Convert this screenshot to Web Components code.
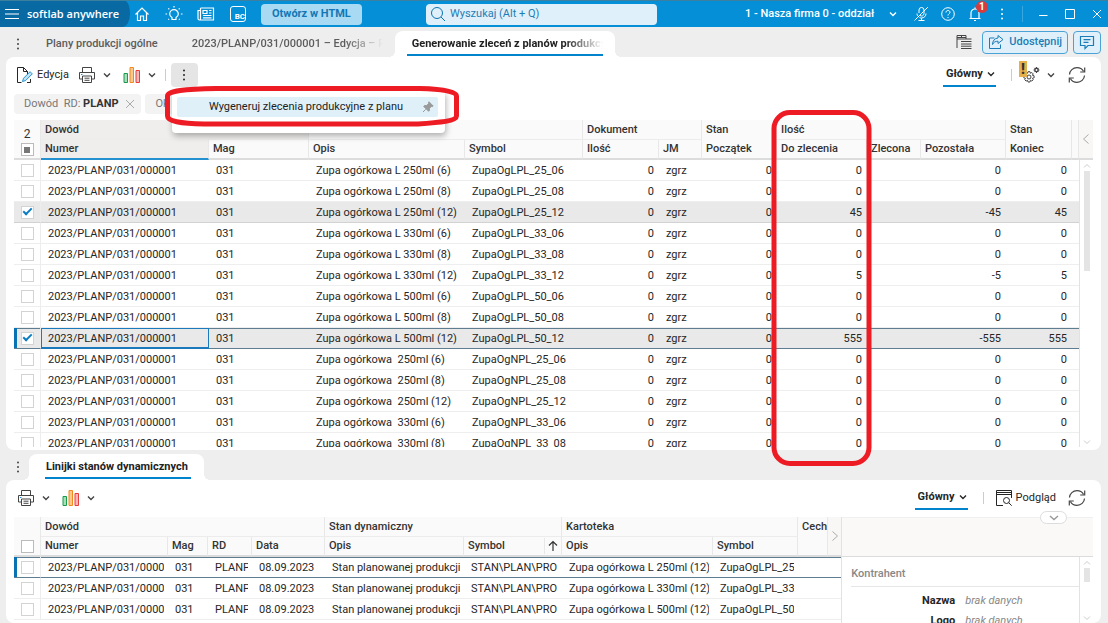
<!DOCTYPE html>
<html lang="pl">
<head>
<meta charset="utf-8">
<meta name="viewport" content="width=device-width, initial-scale=1">
<title>softlab anywhere</title>
<style>
html, body { height: 100%; margin: 0; }
body {
  --accent: #0284cc;
  --accent-dark: #0b73b0;
  --line: #e6e6e6;
  --head: #fafafa;
  --text: #262626;
  font: 400 11px/16px Roboto, "Noto Sans", sans-serif;
  color: var(--text);
  background: #eee;
  overflow: hidden;
}
</style>
</head>
<body>
<sa-app></sa-app>

<script>
/* Icon set: every glyph is drawn on its own viewBox with the current text colour. */
const ICONS = {
  menu: ['0 0 16 16', '<path d="M1 3.500h14M1 8h14M1 12.500h14" stroke-width="1.200"/>'],
  home: ['0 0 16 16', '<path d="M1.500 8.500L8 2l6.500 6.500M3.500 7v7.500h3V10h3v4.500h3V7" stroke-width="1.200"/>'],
  bulb: ['0 0 18 18', '<path d="M7 14.500v-2C5.500 11.700 4.700 10.500 4.700 9a4.300 4.300 0 0 1 8.600 0c0 1.500-.8 2.700-2.300 3.500v2zM9 1v1.600M.5 9h1.600M15.900 9h1.600M3.300 3.300l1 1M14.700 3.300l-1 1M3.300 14.700l.8-.8M14.700 14.700l-.8-.8" stroke-width="1.200"/>'],
  news: ['0 0 18 16', '<path d="M3.500 2h13v12h-14c-1 0-1.500-.7-1.500-1.500V4.500h2.500M3.500 2v10.500c0 1-.5 1.500-1 1.500M12 4.500h2.500M12 7h2.500M6 9.500h8.500M6 11.800h8.500" stroke-width="1.200"/><path d="M6 4.500h4v3H6z" stroke-width="1.200"/>'],
  search: ['0 0 16 16', '<circle cx="7" cy="7" r="5.500"/><path d="M11 11l4 4"/>'],
  chevron: ['0 0 10 10', '<path d="M2 3.500l3 3 3-3" stroke-width="1.400"/>'],
  fold: ['0 0 12 8', '<path d="M2 2l4 3.500L10 2" stroke-width="1.400"/>'],
  left: ['0 0 10 12', '<path d="M7.500 1.500L2.500 6l5 4.500"/>'],
  right: ['0 0 10 12', '<path d="M2.500 1.500L7.500 6l-5 4.500"/>'],
  up: ['0 0 10 10', '<path d="M2 6.500l3-3 3 3"/>'],
  down: ['0 0 10 10', '<path d="M2 3.500l3 3 3-3"/>'],
  mic: ['0 0 16 16', '<path d="M6 7V4a2.500 2.500 0 0 1 5 0v3.500a2.500 2.500 0 0 1-4 2M4 7.500c0 1 .2 1.700.7 2.400M13 7.500c0 2.500-1.800 4.500-4.500 4.500-.8 0-1.500-.2-2-.5M8.500 12v2.500M5.500 14.500h6M15 1L1.500 14.500"/>'],
  help: ['0 0 16 16', '<circle cx="8" cy="8" r="6.300"/><path d="M6 6.500C6 5.200 6.900 4.500 8 4.500s2 .7 2 1.800c0 1.400-2 1.600-2 3.200M8 11v1"/>'],
  bell: ['0 0 16 16', '<path d="M2.500 12.500h11M4 12.500V7a4 4 0 0 1 8 0v5.500M7 14.500h2M8 3V1.500" stroke-width="1.200"/>'],
  dots: ['0 0 6 16', '<g fill="currentColor" stroke="none"><circle cx="3" cy="3.500" r="1"/><circle cx="3" cy="8" r="1"/><circle cx="3" cy="12.500" r="1"/></g>'],
  min: ['0 0 12 12', '<path d="M2 7.500h8.500"/>'],
  max: ['0 0 12 12', '<path d="M1.500 1.500h9v9h-9z"/>'],
  close: ['0 0 12 12', '<path d="M2 2l8 8M10 2l-8 8"/>'],
  layout: ['0 0 16 16', '<path d="M1 14V1.500h9V5H1M1 3.500h9M5.500 1.500V4M5 7.500h10.500M5 10h10.500M5 12.200h10.500M5 14.500h10.500M10 5h5.500"/>'],
  share: ['0 0 16 16', '<path d="M6.500 4H1.500v10.500h11v-4M10 1.500L15 5.500l-5 4V7.200C7.500 7.200 5.500 8.200 4.500 10.500c0-3.500 2-6.200 5.500-6.500z"/>'],
  comment: ['0 0 16 16', '<path d="M1.500 2.500h13v9H9L6 14.500v-3H1.500zM4.500 5.700h7M4.500 8.300h5" stroke-width="1.200"/>'],
  edit: ['0 0 18 18', '<path d="M5.500 16.500h-4v-15h6l4 4v3M7.500 1.500v4h4M14.500 13v3.500H11"/><path d="M6.500 15.500l1-3.200 6.600-6.600 2.200 2.200-6.600 6.600z" stroke="#2490d0" fill="#bfe2f6"/>'],
  print: ['0 0 18 18', '<path d="M4.500 6V1.500h9V6M4 13H1.500V6.500h15V13H14M4.500 10h9v6.500h-9zM6.500 12.200h5M6.500 14.300h5"/><path d="M3 8.500h1.500" stroke="#2490d0"/>'],
  chart: ['0 0 18 18', '<path d="M1 7.500h3.500v9H1z" stroke="#189a4c" fill="#a6dfb8"/><path d="M7 1.500h3.500v15H7z" stroke="#f08a1c" fill="#fac98d"/><path d="M13 4.500h3.500v12H13z" stroke="#e63c3c" fill="#f9b6b4"/>'],
  gear: ['0 0 18 18', '<circle cx="7" cy="11" r="2"/><path d="M6 5.700h2l.4 1.600 1.400-.8 1.400 1.400-.8 1.400 1.700.5v2l-1.700.5.8 1.400-1.400 1.400-1.400-.8-.4 1.700H6l-.5-1.700-1.400.8-1.400-1.400.8-1.400-1.700-.5v-2l1.700-.5-.8-1.400 1.400-1.400 1.400.8z"/><circle cx="14.500" cy="4" r="1.700" stroke-width="1.500"/><path d="M14.500 1v1M14.500 6v1M11.500 4h1M16.500 4h1M12.400 1.900l.7.7M16 5.400l.7.7M16.600 1.900l-.7.7M13 5.400l-.7.7"/>'],
  refresh: ['0 0 18 18', '<path d="M1.500 8.500C1.700 4.500 5 1.700 9 1.700c2.800 0 5.200 1.300 6.500 3.600M16.700 1.500v4.500h-4.500M16.500 9.500c-.2 4-3.500 6.800-7.500 6.800-2.800 0-5.200-1.300-6.500-3.600M1.300 16.500V12h4.500" stroke-width="1.200"/>'],
  preview: ['0 0 18 18', '<path d="M8 16.500H1.500v-15h15V9M1.500 3.500h15M1.500 5.500h15"/><circle cx="11.500" cy="11.500" r="3"/><path d="M13.700 13.700l3 3"/>'],
  pin: ['0 0 12 12', '<path d="M7 .8L11.200 5l-1 .6-.8-.2-2 2 .1 2-.9.9L1.700 5.400l.9-.9 2 .1 2-2-.2-.8zM3.700 8.300L1 11" fill="currentColor"/>'],
  sort: ['0 0 12 12', '<path d="M6 11V1.500M2 5.500l4-4 4 4" stroke-width="1.200"/>']
};

class SaIcon extends HTMLElement {
  connectedCallback() {
    const [box, body] = ICONS[this.getAttribute('name')];
    const [, , w, h] = box.split(' ').map(Number);
    this.attachShadow({ mode: 'open' }).innerHTML = `
      <style>
        :host { display: inline-flex; flex: none; }
        svg { display: block; fill: none; stroke: currentColor; stroke-width: 1; }
      </style>
      <svg width="${w}" height="${h}" viewBox="${box}" aria-hidden="true">${body}</svg>`;
  }
}
customElements.define('sa-icon', SaIcon);

/* <sa-button label> — toolbar button; "drop" adds the chevron. */
class SaButton extends HTMLElement {
  connectedCallback() {
    const label = this.getAttribute('label');
    this.attachShadow({ mode: 'open' }).innerHTML = `
      <style>
        :host { display: inline-flex; flex: none; }
        button {
          display: flex; align-items: center; justify-content: center; gap: 3px;
          min-width: var(--btn-width, 0); height: var(--btn-height, 24px);
          margin: 0; padding: var(--btn-padding, 0);
          font: inherit; font-size: 11px; color: inherit;
          background: var(--btn-bg, none); border: var(--btn-border, 0); border-radius: 4px;
          cursor: pointer; white-space: nowrap;
        }
        .chev { margin-left: 3px; }
        button:focus-visible { outline: 2px solid currentColor; }
      </style>
      <button type="button"${label ? ` aria-label="${label}"` : ''}>
        <slot></slot>${this.hasAttribute('drop') ? '<sa-icon class="chev" name="chevron"></sa-icon>' : ''}
      </button>`;
  }
}
customElements.define('sa-button', SaButton);

/* <sa-select value label> — drop-down with its own chevron. */
class SaSelect extends HTMLElement {
  connectedCallback() {
    this.attachShadow({ mode: 'open' }).innerHTML = `
      <style>
        :host { display: inline-grid; flex: none; grid-template-columns: auto var(--chev-col, 13px); align-items: center; }
        select {
          grid-area: 1 / 1 / 2 / 3; appearance: none; margin: 0; border: 0; padding: 0 var(--chev-col, 13px) 0 0;
          font: inherit; font-size: 11px; color: inherit; background: none; height: 20px;
        }
        option { color: #222; }
        sa-icon { grid-area: 1 / 2; justify-self: end; margin-right: var(--chev-gap, 0); pointer-events: none; }
      </style>
      <select aria-label="${this.getAttribute('label')}"><option>${this.getAttribute('value')}</option></select>
      <sa-icon name="chevron"></sa-icon>`;
  }
}
customElements.define('sa-select', SaSelect);

class SaTopbar extends HTMLElement {
  connectedCallback() {
    this.attachShadow({ mode: 'open' }).innerHTML = `
      <style>
        :host {
          display: grid; grid-template-columns: 17fr 231px 18fr; align-items: center;
          height: 26px; color: #fff; background: #048fd7; border-top: 1px solid #3d7f9e;
          --btn-width: 22px; --btn-height: 22px;
        }
        .left, .right { display: flex; align-items: center; height: 100%; }
        .brand {
          display: flex; align-items: center; gap: 7px; height: 100%; width: 130px;
          padding-left: 4px; box-sizing: border-box; margin-right: 1px;
          font: 600 11px/16px "Open Sans", sans-serif; white-space: nowrap;
          background: #0969a3; border-radius: 0 10px 16px 0 / 0 26px 26px 0;
        }
        .brand sa-button { --btn-width: 16px; }
        .icons { display: flex; gap: 10px; }
        .bc {
          display: flex; align-items: flex-end; justify-content: flex-end; width: 16px; height: 16px;
          box-sizing: border-box; border: 1px solid #fff; border-radius: 3px; font-size: 8px; line-height: 9px; font-weight: 700;
        }
        .html {
          --btn-bg: #a9daf3; --btn-padding: 0 11px; --btn-height: 21px; margin-left: 12px;
          color: #1277b4; font-weight: 700;
        }
        label {
          display: flex; align-items: center; gap: 4px; height: 21px; padding: 0 4px;
          background: #e0f0fa; border-radius: 4px; color: var(--accent-dark);
        }
        input { flex: 1; min-width: 0; border: 0; padding: 0; background: none; font: inherit; color: inherit; outline: 0; }
        input::placeholder { color: #1f7cb4; opacity: 1; }
        .right { justify-content: flex-end; gap: 5px; }
        sa-select { --chev-col: 30px; --chev-gap: 7px; font-weight: 500; }
        .sep { width: 1px; height: 16px; margin: 0 4px; background: #3aa8e0; }
        .bell { position: relative; display: flex; }
        .badge {
          position: absolute; right: -2px; top: -2px; width: 12px; height: 12px; border-radius: 6px;
          background: #d93a3a; font-size: 10px; line-height: 12px; font-weight: 700; text-align: center;
        }
      </style>
      <div class="left">
        <div class="brand"><sa-button label="Menu"><sa-icon name="menu"></sa-icon></sa-button>softlab anywhere</div>
        <div class="icons">
          <sa-button label="Start"><sa-icon name="home"></sa-icon></sa-button>
          <sa-button label="Porady"><sa-icon name="bulb"></sa-icon></sa-button>
          <sa-button label="Nowości"><sa-icon name="news"></sa-icon></sa-button>
          <sa-button><span class="bc">BC</span></sa-button>
        </div>
        <sa-button class="html">Otwórz w HTML</sa-button>
      </div>
      <label><sa-icon name="search"></sa-icon><input type="search" aria-label="Wyszukaj" placeholder="Wyszukaj (Alt + Q)"></label>
      <div class="right">
        <sa-select label="Firma" value="1 - Nasza firma 0 - oddział"></sa-select>
        <sa-button label="Mikrofon"><sa-icon name="mic"></sa-icon></sa-button>
        <sa-button label="Pomoc"><sa-icon name="help"></sa-icon></sa-button>
        <span class="bell"><sa-button label="Powiadomienia"><sa-icon name="bell"></sa-icon></sa-button><span class="badge">1</span></span>
        <sa-button label="Więcej"><sa-icon name="dots"></sa-icon></sa-button>
        <span class="sep"></span>
        <sa-button label="Minimalizuj"><sa-icon name="min"></sa-icon></sa-button>
        <sa-button label="Maksymalizuj"><sa-icon name="max"></sa-icon></sa-button>
        <sa-button label="Zamknij"><sa-icon name="close"></sa-icon></sa-button>
      </div>`;
  }
}
customElements.define('sa-topbar', SaTopbar);

/* <sa-tab active faded snug> — label comes in through the slot. */
class SaTab extends HTMLElement {
  connectedCallback() {
    this.attachShadow({ mode: 'open' }).innerHTML = `
      <style>
        :host { display: flex; flex: none; }
        button {
          position: relative; height: 100%; border: 0; margin: 0; padding: 0 12px; background: none;
          font: inherit; font-weight: 500; color: #5c5c5c; white-space: nowrap; cursor: pointer;
        }
        span { display: block; max-width: 191px; padding: 3px 5px 2px; overflow: hidden; border-bottom: 2px solid transparent; }
        b { display: block; font-weight: inherit; }
        :host([faded]) span { padding-right: 0; }
        :host([faded]) b { overflow: hidden; -webkit-mask-image: linear-gradient(90deg, #000 80%, transparent); mask-image: linear-gradient(90deg, #000 80%, transparent); }
        :host([snug]) button { padding: 0 13px 0 16px; }
        :host([snug]) span { padding: 3px 3px 2px 1px; }
        :host([active]) button { background: #fff; border-radius: 8px 8px 0 0; color: #222; font-weight: 700; }
        :host([active]) span { border-color: var(--accent); }
        :host([active]) button::before, :host([active]) button::after {
          content: ""; position: absolute; bottom: 0; width: 6px; height: 6px;
        }
        :host([active]) button::before { left: -6px; background: radial-gradient(circle at 0 0, transparent 6px, #fff 6px); }
        :host([active]) button::after { right: -6px; background: radial-gradient(circle at 100% 0, transparent 6px, #fff 6px); }
      </style>
      <button type="button" role="tab" aria-selected="${this.hasAttribute('active')}"><span><b><slot></slot></b></span></button>`;
  }
}
customElements.define('sa-tab', SaTab);

class SaTabs extends HTMLElement {
  connectedCallback() {
    this.attachShadow({ mode: 'open' }).innerHTML = `
      <style>
        :host { display: flex; align-items: stretch; box-sizing: border-box; height: 30px; padding: 4px 7px 0 12px; }
        .tabs { display: flex; }
        .more { align-self: center; margin-right: 5px; color: #444; --btn-width: 12px; }
        .end { display: flex; gap: 5px; align-items: center; margin-left: auto; padding-bottom: 4px; }
      </style>
      <sa-button class="more" label="Karty"><sa-icon name="dots"></sa-icon></sa-button>
      <div class="tabs" role="tablist"><slot></slot></div>
      <div class="end"><slot name="end"></slot></div>`;
  }
}
customElements.define('sa-tabs', SaTabs);

/* <sa-card> — white panel: toolbar slots on top, content below. */
class SaCard extends HTMLElement {
  connectedCallback() {
    this.attachShadow({ mode: 'open' }).innerHTML = `
      <style>
        :host {
          display: flex; flex-direction: column; min-height: 0; box-sizing: border-box;
          margin: 0 7px 0 6px; padding: 0 8px 3px; background: #fff; border-radius: 8px;
        }
        .bar { display: flex; flex: none; justify-content: space-between; align-items: center; height: 36px; }
        .group { display: flex; align-items: center; }
      </style>
      <div class="bar">
        <div class="group"><slot name="start"></slot></div>
        <div class="group"><slot name="end"></slot></div>
      </div>
      <slot></slot>`;
  }
}
customElements.define('sa-card', SaCard);

class SaChip extends HTMLElement {
  connectedCallback() {
    this.attachShadow({ mode: 'open' }).innerHTML = `
      <style>
        :host {
          display: flex; align-items: center; gap: 6px; height: 20px; padding: 0 5px 0 10px;
          background: #f3f3f3; border-radius: 4px; color: #777; font-size: 11px;
        }
        sa-button { color: #aaa; --btn-height: 16px; }
      </style>
      <slot></slot>
      <sa-button label="Usuń filtr"><sa-icon name="close"></sa-icon></sa-button>`;
  }
}
customElements.define('sa-chip', SaChip);

/* <sa-menu> — popup with pinnable items. */
class SaMenu extends HTMLElement {
  connectedCallback() {
    this.attachShadow({ mode: 'open' }).innerHTML = `
      <style>
        :host {
          display: block; box-sizing: border-box; width: 273px; padding: 6px 7px 16px 5px;
          background: #fff; border-radius: 4px; box-shadow: 1px 3px 6px rgba(0, 0, 0, .3);
        }
        button {
          display: flex; justify-content: space-between; align-items: center; width: 100%; height: 20px;
          padding: 0 4px 0 32px; border: 0; border-radius: 2px; background: #e0f0f9;
          font: inherit; font-size: 11px; color: #222; white-space: nowrap;
        }
        sa-icon { color: #9a9a9a; }
      </style>
      <button type="button" role="menuitem"><slot></slot><sa-icon name="pin"></sa-icon></button>`;
  }
}
customElements.define('sa-menu', SaMenu);

/* <sa-scrollbar> — thin scroll rail; --thumb sets the thumb length. */
class SaScrollbar extends HTMLElement {
  connectedCallback() {
    this.attachShadow({ mode: 'open' }).innerHTML = `
      <style>
        :host {
          display: flex; flex-direction: column; align-items: center; flex: 1; min-height: 0;
          padding-top: 1px; border-left: 1px solid #e2e2e2; color: #ccc;
        }
        i { width: 6px; height: var(--thumb, 100px); flex: none; background: #e4e4e4; margin-bottom: auto; }
      </style>
      <sa-icon name="up"></sa-icon><i></i><sa-icon name="down"></sa-icon>`;
  }
}
customElements.define('sa-scrollbar', SaScrollbar);

/*
 * <sa-grid> — data table with grouped headers.
 * Model: { count, groups: [{ label, cols: [{ label, width, num, sort, key }] }], rows, checked, current }
 */
class SaGrid extends HTMLElement {
  connectedCallback() {
    this.attachShadow({ mode: 'open' });
    this._render(GRIDS[this.getAttribute('source')]);
  }

  _render(m) {
    const cols = m.groups.flatMap(g => g.cols);
    const colgroup = cols.map(c => `<col${c.width ? ` style="width:${c.width}px"` : ''}>`).join('');
    const groupRow = m.groups.map(g => `
      <th colspan="${g.cols.length}" class="${g.cols.length > 1 ? 'multi' : ''}${g.active ? ' active' : ''}"><div>${g.label}</div></th>`).join('');
    const colRow = cols.map(c => `
      <th class="${c.key ? 'active key' : ''}"><div>${c.label}${c.sort ? '<i class="sort"><sa-icon name="sort"></sa-icon></i>' : ''}</div></th>`).join('');
    const body = m.rows.map((r, i) => {
      const checked = m.checked.includes(i);
      const cls = [checked ? 'checked' : '', m.current === i ? 'current' : ''].join(' ');
      return `<tr class="${cls}">
        <td class="tick"><input type="checkbox" aria-label="Wiersz ${i + 1}"${checked ? ' checked' : ''}></td>
        ${cols.map((c, k) => `<td class="${c.num ? 'num' : ''}"><div>${r[k] === undefined ? '' : r[k]}</div></td>`).join('')}
      </tr>`;
    }).join('');

    this.shadowRoot.innerHTML = `
      <style>${this._css()}</style>
      <table>
        <colgroup><col style="width:27px">${colgroup}</colgroup>
        <thead>
          <tr><th rowspan="2" class="pick">${m.count ? `<span>${m.count}</span>` : ''}<input type="checkbox" class="${m.count ? 'some' : ''}" aria-label="Zaznacz wszystkie"></th>${groupRow}</tr>
          <tr>${colRow}</tr>
        </thead>
        <tbody>${body}</tbody>
      </table>`;
  }

  _css() {
    return `
:host { display: block; flex: 1; min-width: 0; min-height: 0; overflow: hidden; }
table { width: 100%; table-layout: fixed; border-collapse: separate; border-spacing: 0; }
th, td { padding: 0; text-align: left; white-space: nowrap; box-sizing: border-box; }
div { overflow: hidden; white-space: pre; }

th { height: 20px; font-weight: 500; color: #333; background: var(--head); border-right: 1px solid #e8e8e8; }
th div { position: relative; padding: 0 4px; }
th.multi { border-bottom: 1px solid #ececec; }
tr:last-child th, th.pick { border-bottom: 2px solid #dcdcdc; }
th.active { background: #efeeec; }
th.key { border-bottom-color: #2590d0 !important; }
th.pick { text-align: center; vertical-align: bottom; font-weight: 400; font-size: 12px; padding-bottom: 1px; }
th.pick span { display: block; line-height: 14px; }
.sort { position: absolute; right: 0; top: 0; width: 16px; height: 100%; display: grid; place-items: center; background: var(--head); border-left: 1px solid #e8e8e8; }

td { height: 21px; border-bottom: 1px solid #eee; }
td div { margin: 0 4px 0 7px; padding-top: 2px; line-height: 18px; }
.num { text-align: right; }
.num div { margin-right: 5px; }
.tick { text-align: center; border-right: 1px solid #ededed; line-height: 0; }
.checked td { background: #e9e9e9; border-bottom-color: #d2d2d2; }
.current td { border-bottom-color: #5e7d91; box-shadow: inset 0 1px #5e7d91; }
.current .tick { box-shadow: inset 3px 0 #0872b5, inset 0 1px #5e7d91; }
.current.checked td:nth-child(2) { box-shadow: inset 0 0 0 1px #1b7abb; border-bottom-color: #1b7abb; }

input {
  appearance: none; display: inline-grid; place-items: center; vertical-align: middle;
  box-sizing: border-box; width: 13px; height: 13px; margin: 0; background: #fff; border: 1px solid #d3d3d3;
}
input:checked::before {
  content: ""; width: 7px; height: 3px; margin-top: -3px;
  border: solid #0b7cc4; border-width: 0 0 2px 2px; transform: rotate(-45deg);
}
td input:checked::before { box-sizing: border-box; width: 9px; height: 5px; }
th input { border-color: #bbb; }
input.some::before { content: ""; width: 6px; height: 6px; background: #777; }`;
  }
}

const DOC = '2023/PLANP/031/000001';
const soup = (name, code, toDo = 0) =>
  [DOC, '031', `Zupa ogórkowa ${name}`, `ZupaOg${code}`, 0, 'zgrz', 0, toDo, '', -toDo || 0, toDo];

const GRIDS = {
  plan: {
    count: 2,
    checked: [2, 8],
    current: 8,
    groups: [
      { label: 'Dowód', active: true, cols: [{ label: 'Numer', width: 168, key: true }, { label: 'Mag', width: 100 }] },
      { label: '', cols: [{ label: 'Opis', width: 156 }, { label: 'Symbol', width: 118 }] },
      { label: 'Dokument', cols: [{ label: 'Ilość', width: 76, num: true }, { label: 'JM', width: 43 }] },
      { label: 'Stan', cols: [{ label: 'Początek', width: 75, num: true }] },
      { label: 'Ilość', cols: [{ label: 'Do zlecenia', width: 90, num: true }, { label: 'Zlecona', width: 54, num: true }, { label: 'Pozostała', width: 85, num: true }] },
      { label: 'Stan', cols: [{ label: 'Koniec', width: 66, num: true }] },
      { label: '', cols: [{ label: '' }] }
    ],
    rows: [
      soup('L 250ml (6)', 'LPL_25_06'),
      soup('L 250ml (8)', 'LPL_25_08'),
      soup('L 250ml (12)', 'LPL_25_12', 45),
      soup('L 330ml (6)', 'LPL_33_06'),
      soup('L 330ml (8)', 'LPL_33_08'),
      soup('L 330ml (12)', 'LPL_33_12', 5),
      soup('L 500ml (6)', 'LPL_50_06'),
      soup('L 500ml (8)', 'LPL_50_08'),
      soup('L 500ml (12)', 'LPL_50_12', 555),
      soup(' 250ml (6)', 'NPL_25_06'),
      soup(' 250ml (8)', 'NPL_25_08'),
      soup(' 250ml (12)', 'NPL_25_12'),
      soup(' 330ml (6)', 'NPL_33_06'),
      soup(' 330ml (8)', 'NPL_33_08')
    ]
  },
  lines: {
    checked: [],
    current: 0,
    groups: [
      { label: 'Dowód', cols: [{ label: 'Numer', width: 127 }, { label: 'Mag', width: 40 }, { label: 'RD', width: 44 }, { label: 'Data', width: 73 }] },
      { label: 'Stan dynamiczny', cols: [{ label: 'Opis', width: 139 }, { label: 'Symbol', width: 98, sort: true }] },
      { label: 'Kartoteka', cols: [{ label: 'Opis', width: 151 }, { label: 'Symbol', width: 85 }] },
      { label: 'Cecha', cols: [{ label: '' }] }
    ],
    rows: ['250ml (12)|25_12', '330ml (12)|33_12', '500ml (12)|50_12'].map(s => {
      const [name, code] = s.split('|');
      return ['2023/PLANP/031/000001', '031', 'PLANP', '08.09.2023', 'Stan planowanej produkcji', 'STAN\\PLAN\\PRO', `Zupa ogórkowa L ${name}`, `ZupaOgLPL_${code}`];
    })
  }
};
customElements.define('sa-grid', SaGrid);

/* <sa-details> — read-only property list beside the lower grid. */
class SaDetails extends HTMLElement {
  connectedCallback() {
    this.attachShadow({ mode: 'open' }).innerHTML = `
      <style>
        :host { display: flex; flex-direction: column; min-width: 0; min-height: 0; position: relative; border-left: 1px solid #e2e2e2; }
        header { height: 38px; flex: none; background: #faf9f8; border-top: 1px solid #f0f0f0; border-bottom: 1px solid #dcdcdc; }
        .fold {
          position: absolute; right: 26px; top: -6px; width: 27px; height: 13px; padding: 0; display: grid; place-items: center;
          border: 1px solid #ddd; border-radius: 7px; background: #fff; color: #999;
        }
        .body { display: flex; flex: 1; min-height: 0; }
        .form { flex: 1; overflow: hidden; padding-left: 9px; }
        h2 { margin: 9px 0 6px; padding-bottom: 4px; border-bottom: 1px solid var(--line); font: inherit; font-weight: 500; color: #888; }
        dl { display: grid; grid-template-columns: 104px 1fr; column-gap: 10px; row-gap: 4px; margin: 0; }
        dt { font-weight: 700; text-align: right; }
        dd { margin: 0; font-style: italic; color: #888; }
        sa-scrollbar { flex: 0 0 13px; --thumb: 14px; }
      </style>
      <header></header>
      <button class="fold" type="button" aria-label="Zwiń"><sa-icon name="fold"></sa-icon></button>
      <div class="body">
        <div class="form">
          <h2>Kontrahent</h2>
          <dl><dt>Nazwa</dt><dd>brak danych</dd><dt>Logo</dt><dd>brak danych</dd></dl>
        </div>
        <sa-scrollbar></sa-scrollbar>
      </div>`;
  }
}
customElements.define('sa-details', SaDetails);

class SaApp extends HTMLElement {
  connectedCallback() {
    this.attachShadow({ mode: 'open' }).innerHTML = `
      <style>
        :host { display: grid; grid-template-rows: auto auto minmax(0, 11fr) auto minmax(0, 4fr); grid-template-columns: minmax(0, 1fr); height: 100vh; position: relative; overflow: hidden; }
        .layout { align-self: center; margin-right: 5px; color: #444; }
        .blue { --btn-bg: #e0f0fa; --btn-border: 1px solid #4aa3d6; --btn-padding: 0 5px; --btn-height: 23px; color: #1b7db8; font-weight: 500; }
        .sep { width: 1px; height: 12px; background: #ccc; }
        .edit { margin-left: 2px; }
        .print { margin-left: 9px; color: #444; }
        .print.first { margin-left: 3px; }
        .chart { margin-left: 11px; color: #444; }
        .start-sep { margin: 0 5px 0 8px; }
        .more { position: relative; }
        .more sa-button { --btn-bg: #e5e5e5; --btn-width: 27px; }
        sa-menu { position: absolute; left: 1px; top: 28px; z-index: 2; }
        .view { padding-left: 3px; height: 22px; border-bottom: 2px solid var(--accent); font-weight: 700; }
        .view-sep { margin: 0 7px 0 15px; }
        .setup { position: relative; display: flex; padding-left: 3px; color: #444; }
        .warn {
          position: absolute; left: 0; top: -2px; width: 8px; height: 16px; background: #e5b04b;
          font-size: 14px; line-height: 16px; font-weight: 900; text-align: center; color: #333;
        }
        .refresh { margin: 0 7px 0 12px; color: #444; }
        .preview { margin-left: 4px; }
        .chips { display: flex; flex: none; gap: 4px; margin: 1px 0 6px; }
        .chips b { color: #333; font-weight: 700; }
        .grid { display: flex; flex: 1; min-height: 0; }
        .side { display: flex; flex-direction: column; width: 14px; }
        .nav { flex: none; display: grid; place-items: center; height: 40px; box-sizing: border-box; padding: 0; border: 0; border-bottom: 2px solid #dcdcdc; background: #f8f7f5; color: #aaa; }
        .split { display: grid; grid-template-columns: 23fr 7fr; flex: 1; min-height: 0; margin-top: 1px; }
        .lines { display: flex; min-width: 0; position: relative; }
        .lines .nav { position: absolute; right: 0; top: 0; width: 14px; border-left: 1px solid #e8e8e8; }
        .lower { padding-bottom: 0; }
        .marks { position: absolute; left: 0; top: 0; z-index: 3; pointer-events: none; fill: none; stroke: #ed1c24; stroke-width: 5; }
      </style>

      <sa-topbar></sa-topbar>

      <sa-tabs>
        <sa-tab>Plany produkcji ogólne</sa-tab>
        <sa-tab faded>2023/PLANP/031/000001 – Edycja – P</sa-tab>
        <sa-tab faded active>Generowanie zleceń z planów produkcyjnych</sa-tab>
        <sa-button slot="end" class="layout" label="Układ"><sa-icon name="layout"></sa-icon></sa-button>
        <sa-button slot="end" class="blue"><sa-icon name="share"></sa-icon>&nbsp;Udostępnij</sa-button>
        <sa-button slot="end" class="blue" label="Komentarze"><sa-icon name="comment"></sa-icon></sa-button>
      </sa-tabs>

      <sa-card>
        <sa-button slot="start" class="edit"><sa-icon name="edit"></sa-icon>Edycja</sa-button>
        <sa-button slot="start" class="print" label="Drukuj" drop><sa-icon name="print"></sa-icon></sa-button>
        <sa-button slot="start" class="chart" label="Wykres" drop><sa-icon name="chart"></sa-icon></sa-button>
        <span slot="start" class="sep start-sep"></span>
        <span slot="start" class="more">
          <sa-button label="Więcej"><sa-icon name="dots"></sa-icon></sa-button>
          <sa-menu>Wygeneruj zlecenia produkcyjne z planu</sa-menu>
        </span>
        <sa-select slot="end" class="view" label="Widok" value="Główny"></sa-select>
        <span slot="end" class="sep view-sep"></span>
        <span slot="end" class="setup"><sa-button label="Ustawienia" drop><sa-icon name="gear"></sa-icon></sa-button><span class="warn">!</span></span>
        <sa-button slot="end" class="refresh" label="Odśwież"><sa-icon name="refresh"></sa-icon></sa-button>

        <div class="chips">
          <sa-chip><span>Dowód &nbsp;RD: <b>PLANP</b></span></sa-chip>
          <sa-chip>Ok</sa-chip>
        </div>
        <div class="grid">
          <sa-grid source="plan"></sa-grid>
          <div class="side">
            <button class="nav" type="button" aria-label="Rozwiń panel"><sa-icon name="left"></sa-icon></button>
            <sa-scrollbar></sa-scrollbar>
          </div>
        </div>
      </sa-card>

      <sa-tabs><sa-tab active snug>Linijki stanów dynamicznych</sa-tab></sa-tabs>

      <sa-card class="lower">
        <sa-button slot="start" class="print first" label="Drukuj" drop><sa-icon name="print"></sa-icon></sa-button>
        <sa-button slot="start" class="chart" label="Wykres" drop><sa-icon name="chart"></sa-icon></sa-button>
        <sa-select slot="end" class="view" label="Widok" value="Główny"></sa-select>
        <span slot="end" class="sep view-sep"></span>
        <sa-button slot="end" class="preview"><sa-icon name="preview"></sa-icon>Podgląd</sa-button>
        <sa-button slot="end" class="refresh" label="Odśwież"><sa-icon name="refresh"></sa-icon></sa-button>
        <div class="split">
          <div class="lines">
            <sa-grid source="lines"></sa-grid>
            <button class="nav" type="button" aria-label="Następne kolumny"><sa-icon name="right"></sa-icon></button>
          </div>
          <sa-details></sa-details>
        </div>
      </sa-card>

      <svg class="marks" width="900" height="480" viewBox="0 0 900 480" aria-hidden="true">
        <path d="M216 88.500H420C440 89 456.500 91 456.500 96V116C456.500 121 440 122.500 418 124H204C180 123.500 167.500 121 167.500 116V96C167.500 91 185 89 216 88.500Z"/>
        <rect x="774" y="112.500" width="95" height="351" rx="16"/>
      </svg>`;
  }
}
customElements.define('sa-app', SaApp);
</script>
</body>
</html>
